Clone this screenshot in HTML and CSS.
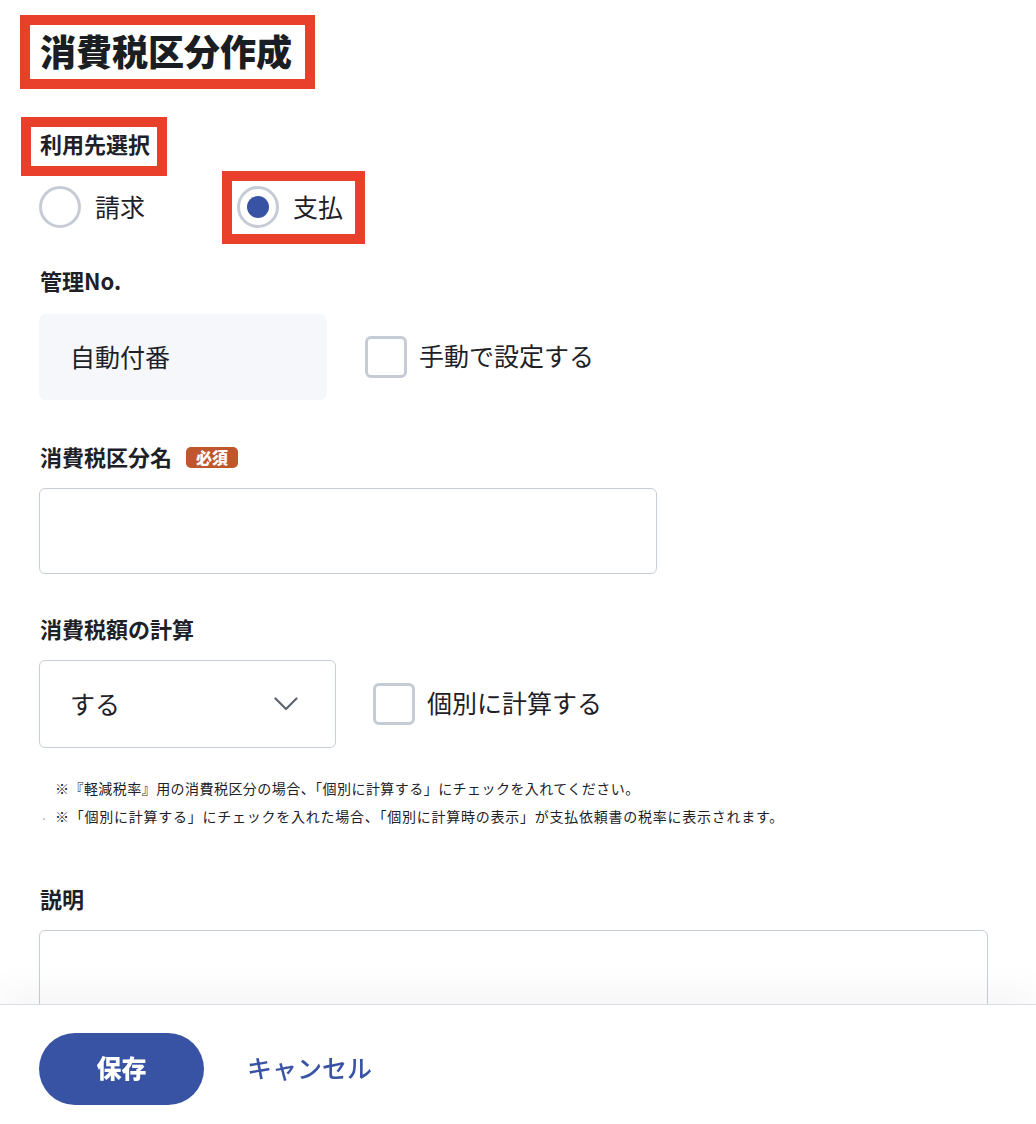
FILE: index.html
```html
<!DOCTYPE html>
<html lang="ja">
<head>
<meta charset="utf-8">
<title>消費税区分作成</title>
<link rel="stylesheet" href="styles.css">
</head>
<body>
<main class="page">
  <h1 class="title hl">消費税区分作成</h1>

  <section class="field field-usage">
    <div class="label hl label-usage">利用先選択</div>
    <div class="radio-row">
      <label class="radio">
        <span class="radio-circle"></span>
        <span class="radio-text">請求</span>
      </label>
      <label class="radio hl">
        <span class="radio-circle checked"></span>
        <span class="radio-text">支払</span>
      </label>
    </div>
  </section>

  <section class="field field-no">
    <div class="label">管理No.</div>
    <div class="row">
      <div class="auto-box"><span class="auto-text">自動付番</span></div>
      <label class="check">
        <span class="check-box"></span>
        <span class="check-text">手動で設定する</span>
      </label>
    </div>
  </section>

  <section class="field field-name">
    <div class="label">消費税区分名<span class="badge">必須</span></div>
    <div class="input"></div>
  </section>

  <section class="field field-calc">
    <div class="label">消費税額の計算</div>
    <div class="row">
      <div class="select">
        <span class="select-text">する</span>
        <svg class="chevron" width="24" height="14" viewBox="0 0 24 14"><path d="M1.5 1.5 L12 12 L22.5 1.5" fill="none" stroke="#5d6570" stroke-width="2.2" stroke-linecap="round" stroke-linejoin="round"/></svg>
      </div>
      <label class="check check-calc">
        <span class="check-box"></span>
        <span class="check-text">個別に計算する</span>
      </label>
    </div>
    <ul class="notes">
      <li class="note-1">※『軽減税率』用の消費税区分の場合、「個別に計算する」にチェックを入れてください。</li>
      <li class="note-2 dot">※「個別に計算する」にチェックを入れた場合、「個別に計算時の表示」が支払依頼書の税率に表示されます。</li>
    </ul>
  </section>

  <section class="field field-desc">
    <div class="label">説明</div>
    <div class="textarea"></div>
  </section>
</main>

<footer class="footer">
  <button class="btn-save">保存</button>
  <button class="btn-cancel">キャンセル</button>
</footer>
</body>
</html>
```

FILE: styles.css
```css
* { box-sizing: border-box; }

html, body {
  margin: 0;
  padding: 0;
  background: #ffffff;
  color: #1d2127;
  font-family: "Noto Sans CJK JP", "Noto Sans", sans-serif;
}

.page {
  padding: 25px 0 0 39px;
}

.hl {
  outline: 10px solid #e8402a;
}

.title {
  display: inline-block;
  margin: 0 0 0 -9px;
  padding: 0 13px 4px 10px;
  height: 54px;
  line-height: 50px;
  font-size: 36px;
  font-weight: 900;
  color: #1a1d21;
}

.field { display: block; }

.label {
  font-size: 22px;
  font-weight: 700;
  line-height: 24px;
  height: 30px;
  padding-left: 1px;
  display: flex;
  align-items: flex-start;
  color: #1d2127;
}

.field-usage { margin-top: 48px; }

.label-usage {
  display: inline-block;
  margin-left: -8px;
  padding: 0 7px 6px 9px;
  height: 39px;
  line-height: 33px;
}

.radio-row {
  display: flex;
  gap: 75px;
  margin: 15px 0 0 -5px;
}

.radio {
  display: inline-flex;
  align-items: center;
  gap: 14px;
  padding: 5px 12px 6px 5px;
}

.radio-circle {
  width: 42px;
  height: 42px;
  border-radius: 50%;
  border: 3px solid #c6ccd5;
  background: #fff;
  display: flex;
  align-items: center;
  justify-content: center;
}

.radio-circle.checked::after {
  content: "";
  width: 22px;
  height: 22px;
  border-radius: 50%;
  background: #3953a4;
}

.radio-text {
  font-size: 25px;
  line-height: 40px;
  padding-bottom: 2px;
}

.field-no { margin-top: 34px; }

.row {
  display: flex;
  align-items: center;
}

.field-no .row { margin-top: 16px; }

.auto-box {
  width: 288px;
  height: 86px;
  background: #f5f7fa;
  border-radius: 7px;
  padding-left: 31px;
  display: flex;
  align-items: center;
  font-size: 25px;
}

.auto-text { padding-bottom: 3px; }

.check {
  display: inline-flex;
  align-items: center;
  gap: 12px;
  margin-left: 38px;
}

.check-calc { margin-left: 37px; }

.check-box {
  width: 42px;
  height: 42px;
  border: 3px solid #c6ccd5;
  border-radius: 6px;
  background: #fff;
}

.check-text {
  font-size: 25px;
  line-height: 38px;
  padding-bottom: 4px;
}

.field-name { margin-top: 44px; }

.badge {
  display: inline-block;
  margin: 3px 0 0 14px;
  width: 52px;
  height: 21px;
  line-height: 20px;
  border-radius: 5px;
  background: #c0562c;
  color: #fff;
  font-size: 16px;
  font-weight: 900;
  text-align: center;
}

.input {
  margin-top: 14px;
  width: 618px;
  height: 86px;
  border: 1px solid #c8ced7;
  border-radius: 6px;
  background: #fff;
}

.field-calc { margin-top: 42px; }

.field-calc .row { margin-top: 14px; }

.select {
  width: 297px;
  height: 88px;
  border: 1px solid #c8ced7;
  border-radius: 6px;
  background: #fff;
  display: flex;
  align-items: center;
  justify-content: space-between;
  padding: 0 37px 0 30px;
}

.select-text { font-size: 25px; padding-bottom: 3px; }

.chevron { display: block; margin-top: 0; }

.notes {
  list-style: none;
  margin: 26px 0 0 0;
  padding: 0 0 0 16px;
}

.notes li {
  font-size: 14px;
  line-height: 28px;
  color: #1d2127;
  position: relative;
}

.note-1 { letter-spacing: 0.45px; }
.note-2 { letter-spacing: 0.75px; }

.notes li.dot::before {
  content: "";
  position: absolute;
  left: -12px;
  top: 16px;
  width: 2px;
  height: 2px;
  background: #b5b9bf;
  border-radius: 50%;
}

.field-desc { margin-top: 56px; }

.textarea {
  margin-top: 14px;
  width: 949px;
  height: 160px;
  border: 1px solid #c8ced7;
  border-radius: 6px;
  background: #fff;
}

.footer {
  position: fixed;
  left: 0;
  right: 0;
  bottom: 0;
  height: 120px;
  background: #fff;
  border-top: 1px solid #d9dde3;
  box-shadow: 0 -18px 30px rgba(30, 40, 60, 0.035);
  display: flex;
  align-items: flex-start;
  padding: 28px 0 0 39px;
  gap: 43px;
}

.btn-save {
  width: 165px;
  height: 72px;
  border: none;
  border-radius: 36px;
  background: #3953a4;
  color: #fff;
  font-family: inherit;
  font-size: 25px;
  font-weight: 900;
  padding: 0 0 4px;
  cursor: pointer;
}

.btn-cancel {
  height: 72px;
  border: none;
  background: transparent;
  color: #3953a4;
  font-family: inherit;
  font-size: 25px;
  font-weight: 500;
  padding: 0 0 4px;
  cursor: pointer;
}
```
